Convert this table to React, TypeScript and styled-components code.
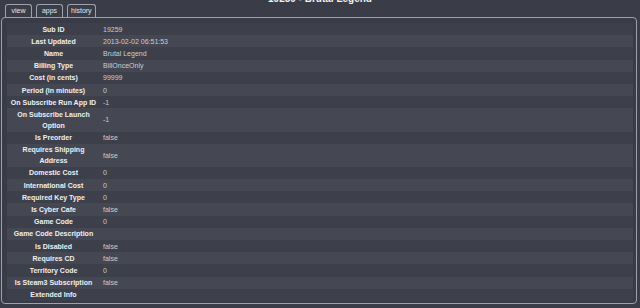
import React, { FC } from "react";
import styled, { createGlobalStyle } from "styled-components";

const GlobalStyle = createGlobalStyle`
  html, body {
    margin: 0;
    padding: 0;
    background: #3a3d47;
    overflow: hidden;
  }
  body {
    font-family: "Liberation Sans", Arial, sans-serif;
  }
`;

interface IRow {
  label: string;
  value?: string;
}

const rows: IRow[] = [
  { label: "Sub ID", value: "19259" },
  { label: "Last Updated", value: "2013-02-02 06:51:53" },
  { label: "Name", value: "Brutal Legend" },
  { label: "Billing Type", value: "BillOnceOnly" },
  { label: "Cost (in cents)", value: "99999" },
  { label: "Period (in minutes)", value: "0" },
  { label: "On Subscribe Run App ID", value: "-1" },
  { label: "On Subscribe Launch Option", value: "-1" },
  { label: "Is Preorder", value: "false" },
  { label: "Requires Shipping Address", value: "false" },
  { label: "Domestic Cost", value: "0" },
  { label: "International Cost", value: "0" },
  { label: "Required Key Type", value: "0" },
  { label: "Is Cyber Cafe", value: "false" },
  { label: "Game Code", value: "0" },
  { label: "Game Code Description" },
  { label: "Is Disabled", value: "false" },
  { label: "Requires CD", value: "false" },
  { label: "Territory Code", value: "0" },
  { label: "Is Steam3 Subscription", value: "false" },
  { label: "Extended Info" },
];

const Page = styled.div`
  display: flex;
  flex-direction: column;
  width: 640px;
  height: 308px;
`;

const Title = styled.h1`
  margin: -6px 0 0;
  height: 10px;
  font-size: 10px;
  line-height: 10px;
  font-weight: bold;
  text-align: center;
  color: #f2f2f2;
`;

const Tabs = styled.ul`
  display: flex;
  gap: 4px;
  margin: 0;
  padding: 0 0 0 5px;
  list-style: none;
`;

const Tab = styled.li`
  min-width: 19px;
  height: 12px;
  padding: 0 3px;
  border: 1px solid #9ea1a9;
  border-bottom: none;
  border-radius: 3px 3px 0 0;
  font-size: 7px;
  line-height: 12px;
  text-align: center;
  color: #e4e5e8;
`;

const Panel = styled.div`
  margin: 0 3px 0 1px;
  padding: 5px 3px 2px 5px;
  border: 1px solid #9ea1a9;
  border-radius: 4px;
  background: #393c46;
`;

const Table = styled.table`
  width: 100%;
  border-collapse: collapse;
  font-size: 7px;
  line-height: 11px;
`;

const Row = styled.tr<{ striped: boolean }>`
  background: ${({ striped }) => (striped ? "#454853" : "#3d404a")};
`;

const Label = styled.th`
  width: 89px;
  padding: 0.6px 2px;
  font-weight: bold;
  text-align: center;
  color: #eeeff1;
`;

const Value = styled.td`
  padding: 0.6px 3px;
  text-align: left;
  color: #caccd2;
`;

const App: FC = () => {
  return (
    <Page>
      <GlobalStyle />
      <Title>19259 - Brutal Legend</Title>
      <Tabs>
        <Tab>view</Tab>
        <Tab>apps</Tab>
        <Tab>history</Tab>
      </Tabs>
      <Panel>
        <Table>
          <tbody>
            {rows.map((row, index) => (
              <Row key={row.label} striped={index % 2 === 1}>
                <Label>{row.label}</Label>
                <Value>{row.value}</Value>
              </Row>
            ))}
          </tbody>
        </Table>
      </Panel>
    </Page>
  );
};

export default App;
